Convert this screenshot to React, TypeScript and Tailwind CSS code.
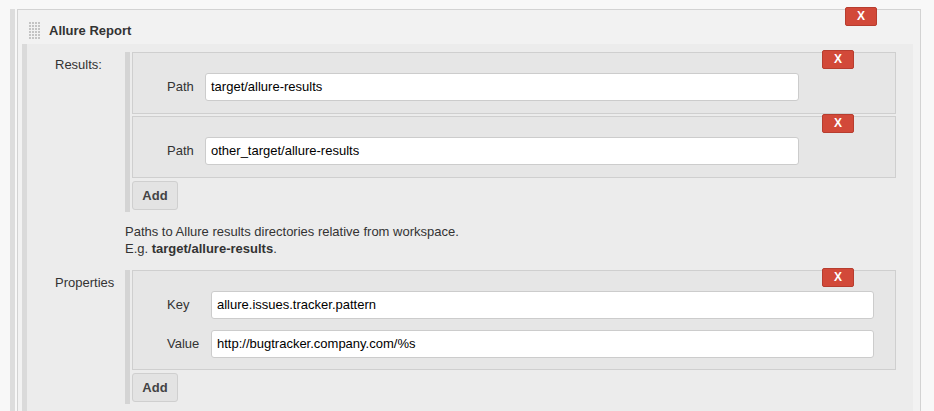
import React from 'react';

const font = "font-['Liberation_Sans',Arial,sans-serif]";

function DeleteButton({ className }: { className: string }) {
  return (
    <button
      className={`absolute w-[32px] h-[19px] bg-[#d24939] border border-[#b73d2f] rounded-[2px] text-white text-[12px] font-bold leading-[17px] text-center ${className}`}
    >
      X
    </button>
  );
}

function AddButton() {
  return (
    <button className="mt-[3px] w-[46px] h-[29px] bg-[#e3e3e3] border border-[#cfcfcf] rounded-[3px] text-[13px] font-bold text-[#444] leading-[27px]">
      Add
    </button>
  );
}

function Grip() {
  const dots = [];
  for (let r = 0; r < 6; r++) {
    for (let c = 0; c < 4; c++) {
      dots.push(<rect key={`${r}-${c}`} x={c * 3} y={r * 3} width="2" height="2" fill="#c4c4c4" />);
    }
  }
  return (
    <svg width="12" height="18" viewBox="0 0 12 18" className="shrink-0">
      {dots}
    </svg>
  );
}

function Input({ value, width }: { value: string; width: string }) {
  return (
    <div className={`${width} h-[28px] bg-white border border-[#cccccc] rounded-[3px] px-[5px] text-[13px] leading-[26px] text-black`}>
      {value}
    </div>
  );
}

export default function App() {
  return (
    <div className={`${font} min-h-screen bg-[#f8f8f8] pl-[10px] pt-[9px] text-[#333] text-[13px]`}>
      <div className="flex gap-[2px] min-h-[402px]">
        <div className="w-[5px] bg-[#dddddd] shrink-0" />
        <div className="relative w-[904px] bg-[#f2f2f2] border-t border-x border-[#d3d3d3]">
          <DeleteButton className="top-[-3px] right-[43px]" />

          <div className="h-[34px] pt-[12px] pl-[11px] flex items-start">
            <div className="flex items-center gap-[8px] h-[18px]">
              <Grip />
              <span className="font-bold text-[13px] text-[#333]">Allure Report</span>
            </div>
          </div>

          <div className="ml-[4px] mr-[7px] flex bg-[#ececec] min-h-[370px]">
            <div className="w-[5px] bg-[#dadada] shrink-0" />
            <div className="flex-1 pt-[8px] pr-[17px]">
              {/* Results */}
              <div className="flex">
                <div className="w-[98px] pl-[28px] pt-[5px] leading-[15px]">Results:</div>
                <div className="flex gap-[2px] flex-1">
                  <div className="w-[5px] bg-[#d4d4d4] shrink-0" />
                  <div className="flex-1 pb-[2px]">
                    <div className="flex flex-col gap-[2px]">
                      {['target/allure-results', 'other_target/allure-results'].map((p) => (
                        <div key={p} className="relative bg-[#e6e6e6] border border-[#cfcfcf] pt-[20px] pb-[12px] pl-[34px] flex items-center">
                          <DeleteButton className="top-[-3px] right-[41px]" />
                          <div className="w-[38px]">Path</div>
                          <Input value={p} width="w-[594px]" />
                        </div>
                      ))}
                    </div>
                    <AddButton />
                  </div>
                </div>
              </div>

              <div className="ml-[98px] mt-[11px] leading-[17px] text-[#333]">
                <div>Paths to Allure results directories relative from workspace.</div>
                <div>
                  E.g. <b>target/allure-results</b>.
                </div>
              </div>

              {/* Properties */}
              <div className="flex mt-[13px]">
                <div className="w-[98px] pl-[28px] pt-[5px] leading-[15px]">Properties</div>
                <div className="flex gap-[2px] flex-1">
                  <div className="w-[5px] bg-[#d4d4d4] shrink-0" />
                  <div className="flex-1 pb-[2px]">
                    <div className="relative bg-[#e6e6e6] border border-[#cfcfcf] pt-[20px] pb-[11px] pl-[34px] flex flex-col gap-[11px]">
                      <DeleteButton className="top-[-3px] right-[41px]" />
                      <div className="flex items-center">
                        <div className="w-[44px]">Key</div>
                        <Input value="allure.issues.tracker.pattern" width="w-[663px]" />
                      </div>
                      <div className="flex items-center">
                        <div className="w-[44px]">Value</div>
                        <Input value="http://bugtracker.company.com/%s" width="w-[663px]" />
                      </div>
                    </div>
                    <AddButton />
                  </div>
                </div>
              </div>
            </div>
          </div>
        </div>
      </div>
    </div>
  );
}
